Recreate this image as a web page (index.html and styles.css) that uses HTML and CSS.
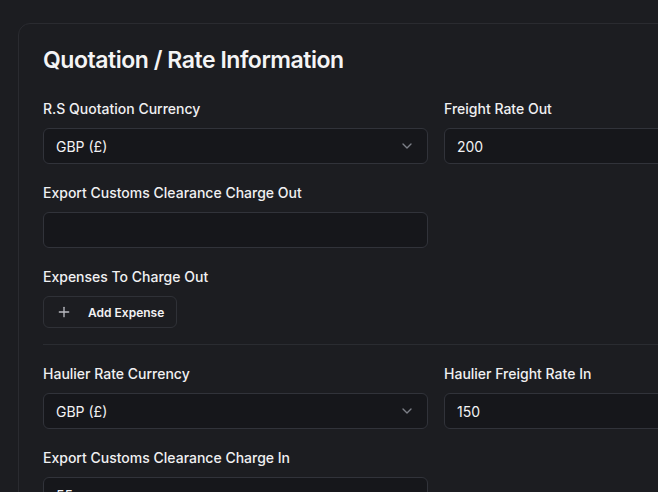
FILE: index.html
```html
<!DOCTYPE html>
<html lang="en">
<head>
<meta charset="utf-8">
<title>Quotation / Rate Information</title>
<link rel="stylesheet" href="styles.css">
</head>
<body>
<section class="card">
  <h2 class="card-title">Quotation / Rate Information</h2>
  <div class="form-grid">
    <div class="field">
      <label class="label">R.S Quotation Currency</label>
      <div class="control select">
        <span>GBP (£)</span>
        <svg class="chev" width="16" height="16" viewBox="0 0 24 24" fill="none" stroke="currentColor" stroke-width="2" stroke-linecap="round" stroke-linejoin="round"><path d="m6 9 6 6 6-6"/></svg>
      </div>
    </div>
    <div class="field">
      <label class="label">Freight Rate Out</label>
      <div class="control"><span>200</span></div>
    </div>
    <div class="field">
      <label class="label">Export Customs Clearance Charge Out</label>
      <div class="control"></div>
    </div>
    <div class="field empty"></div>
    <div class="field">
      <label class="label">Expenses To Charge Out</label>
      <button class="btn" type="button">
        <svg class="plus" width="16" height="16" viewBox="0 0 24 24" fill="none" stroke="currentColor" stroke-width="2" stroke-linecap="round" stroke-linejoin="round"><path d="M5 12h14"/><path d="M12 5v14"/></svg>
        <span>Add Expense</span>
      </button>
    </div>
  </div>
  <hr class="divider">
  <div class="form-grid">
    <div class="field">
      <label class="label">Haulier Rate Currency</label>
      <div class="control select">
        <span>GBP (£)</span>
        <svg class="chev" width="16" height="16" viewBox="0 0 24 24" fill="none" stroke="currentColor" stroke-width="2" stroke-linecap="round" stroke-linejoin="round"><path d="m6 9 6 6 6-6"/></svg>
      </div>
    </div>
    <div class="field">
      <label class="label">Haulier Freight Rate In</label>
      <div class="control"><span>150</span></div>
    </div>
    <div class="field">
      <label class="label">Export Customs Clearance Charge In</label>
      <div class="control"><span>55</span></div>
    </div>
  </div>
</section>
</body>
</html>
```
FILE: styles.css
```css
* { box-sizing: border-box; }
html, body { margin: 0; }
body {
  background: #1c1d21;
  font-family: Inter, "Noto Sans", sans-serif;
  color: #f2f2f4;
  padding: 23px 0 0 18px;
  overflow: hidden;
  height: 492px;
}
.card {
  width: 836px;
  border: 1px solid #2a2b30;
  border-radius: 12px;
  background: #1c1d21;
  padding: 24px;
}
.card-title {
  margin: 0 0 27px;
  font-size: 23px;
  line-height: 24px;
  font-weight: 600;
  letter-spacing: -0.02em;
  color: #f4f4f5;
}
.form-grid {
  display: grid;
  grid-template-columns: 385px 385px;
  column-gap: 16px;
  row-gap: 19px;
}
.field {
  display: flex;
  flex-direction: column;
  align-items: flex-start;
}
.label {
  font-size: 14px;
  line-height: 20px;
  font-weight: 500;
  margin-bottom: 9px;
  color: #f0f0f2;
}
.control {
  width: 100%;
  height: 36px;
  border: 1px solid #31333a;
  border-radius: 6px;
  background: #16171b;
  padding: 0 12px;
  display: flex;
  align-items: center;
  justify-content: space-between;
  font-size: 14px;
  color: #f2f2f4;
}
.chev { color: #7d8088; }
.btn {
  height: 32px;
  display: flex;
  align-items: center;
  gap: 16px;
  padding: 0 12px;
  border: 1px solid #2f3137;
  border-radius: 6px;
  background: #1c1d21;
  color: #f2f2f4;
  font-family: Inter, "Noto Sans", sans-serif;
  font-size: 12px;
  font-weight: 600;
}
.plus { color: #b9bbc1; }
.divider {
  border: 0;
  border-top: 1px solid #2a2c31;
  margin: 16px 0 19px;
}
```
